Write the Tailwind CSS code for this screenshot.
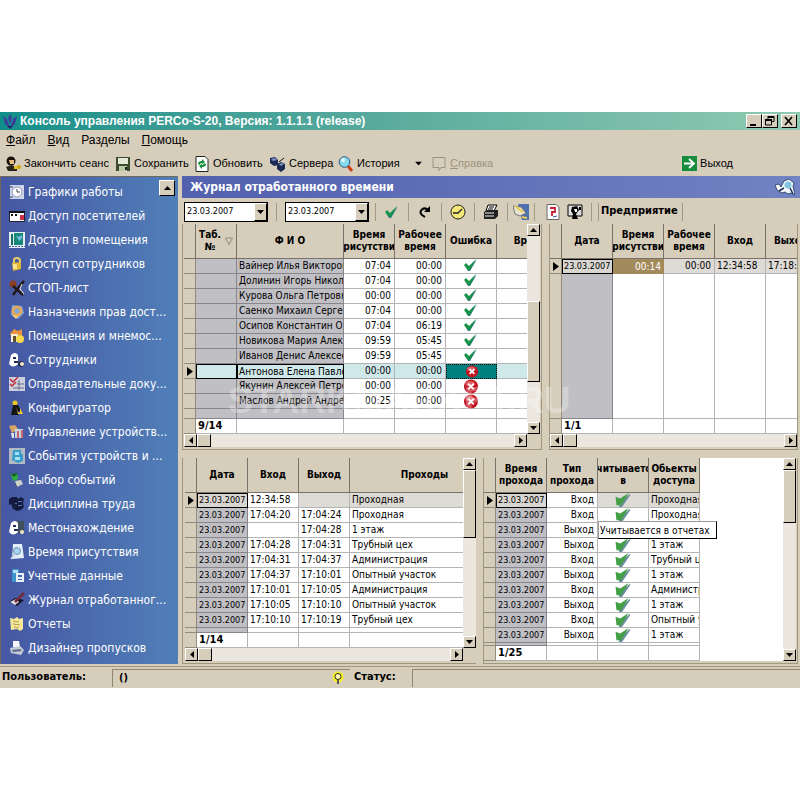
<!DOCTYPE html>
<html lang="ru">
<head>
  <meta charset="UTF-8">
  <meta name="viewport" content="width=device-width, initial-scale=1.0">
  <title>Консоль управления PERCo-S-20</title>
  <script src="https://cdn.jsdelivr.net/npm/@tailwindcss/browser@4"></script>
</head>
<body class="bg-white py-28 font-['DejaVu_Sans_Condensed','DejaVu_Sans',sans-serif] text-black">

  <!-- Shared icons -->
  <svg class="hidden" xmlns="http://www.w3.org/2000/svg">
    <symbol id="ok" viewBox="0 0 14 12"><path d="M2 6l3 3 8-9-7 12H4L1 7z" fill="#3c6f8c"/><path d="M0 6l2-2 3 3 7-7-6 11H4z" fill="#159447"/></symbol>
    <symbol id="ok2" viewBox="0 0 16 15"><path d="M2 6l4 3 9-8 1 1-9 13H4z" fill="#6c8fa0"/><path d="M0 4l5 2L14 0 6 13H1z" fill="#43a047"/></symbol>
    <symbol id="err" viewBox="0 0 16 16"><circle cx="8" cy="8" r="7.5" fill="#c2141f"/><ellipse cx="7" cy="5" rx="5" ry="3" fill="#e0606a"/><path d="M5 5l6 6M11 5l-6 6" stroke="#fff" stroke-width="2"/></symbol>
    <symbol id="up" viewBox="0 0 7 4"><path d="M0 4h7L3.500 0z"/></symbol>
    <symbol id="down" viewBox="0 0 7 4"><path d="M0 0h7L3.500 4z"/></symbol>
    <symbol id="left" viewBox="0 0 4 7"><path d="M4 0v7L0 3.500z"/></symbol>
    <symbol id="right" viewBox="0 0 4 7"><path d="M0 0v7l4-3.500z"/></symbol>
  </svg>

  <div class="bg-[#d6cdbb]">

    <!-- Title bar -->
    <header class="flex h-[18px] items-center bg-linear-to-r from-[#0f8f8b] to-[#8fcab2] pl-[2px] pr-[3px]">
      <svg class="mr-[2px] h-4 w-4 shrink-0" viewBox="0 0 16 16"><path d="M8 1l2 4-2 6-2-6zM1 3l4 3 3 9-5-4zM15 3l-4 3-3 9 5-4z" fill="#3b3f9c"/><path d="M5 13h6l-3 3z" fill="#24246c"/></svg>
      <h1 class="flex-1 whitespace-nowrap font-['Liberation_Sans',sans-serif] text-[12px] font-bold text-white">Консоль управления PERCo-S-20, Версия: 1.1.1.1 (release)</h1>
      <button class="h-[14px] w-4 border border-t-white border-l-white border-r-black border-b-black bg-[#d6cdbb]" aria-label="Свернуть"><svg class="h-3 w-3" viewBox="0 0 12 12"><path d="M3 9h6v2H3z"/></svg></button>
      <button class="h-[14px] w-4 border border-t-white border-l-white border-r-black border-b-black bg-[#d6cdbb]" aria-label="Восстановить"><svg class="h-3 w-3" viewBox="0 0 12 12"><path d="M5 1.500h6v5H9M5 1v3M2.500 5h6v5h-6z" fill="none" stroke="#000"/><path d="M5 1h6v2H5zM2 4h7v2H2z"/></svg></button>
      <button class="ml-[3px] h-[14px] w-4 border border-t-white border-l-white border-r-black border-b-black bg-[#d6cdbb]" aria-label="Закрыть"><svg class="h-3 w-3" viewBox="0 0 12 12"><path d="M3 2l7 8M10 2l-7 8" stroke="#000" stroke-width="1.600"/></svg></button>
    </header>

    <!-- Menu -->
    <nav class="flex h-[19px] items-center gap-3 pl-[6px] font-['Liberation_Sans',sans-serif] text-[12px]">
      <a href="#"><u>Ф</u>айл</a>
      <a href="#"><u>В</u>ид</a>
      <a href="#">Разделы</a>
      <a href="#"><u>П</u>омощь</a>
    </nav>

    <!-- Main toolbar -->
    <div class="flex h-[27px] items-center whitespace-nowrap pt-[2px] pl-[5px] font-['Liberation_Sans',sans-serif] text-[11px]">
      <button class="flex w-[110px] items-center gap-[3px]">
        <svg class="h-4 w-4" viewBox="0 0 16 16"><circle cx="6" cy="5" r="4.500" fill="#1a1208"/><path d="M4 4h5v4H5z" fill="#e8bd7c"/><path d="M1 11l6-2 5 3v3H3z" fill="#2a2416"/><path d="M9 10h6v3H9z" fill="#e2c228"/><circle cx="14" cy="11" r="2" fill="#cfa810"/></svg>
        Закончить сеанс
      </button>
      <button class="flex w-[79px] items-center gap-[3px]">
        <svg class="h-4 w-4" viewBox="0 0 16 16"><path d="M1 1h14v14H1z" fill="#3c4c2c"/><path d="M3 2h10v6H3z" fill="#e4e8d8"/><path d="M4 10h8v5H4z" fill="#b6c8a4"/><path d="M10 11h2v3h-2z" fill="#222"/></svg>
        Сохранить
      </button>
      <button class="flex w-[76px] items-center gap-[3px]">
        <svg class="h-4 w-4" viewBox="0 0 16 16"><path d="M2 .5h9l3 3v12H2z" fill="#fff" stroke="#222"/><path d="M4 8q0-3 4-3V3l3 3-3 2V7Q6 7 6 9zM12 8q0 3-4 3v2l-3-3 3-2v1q2 0 2-2z" fill="#168a3c"/></svg>
        Обновить
      </button>
      <button class="flex w-[68px] items-center gap-[3px]">
        <svg class="h-4 w-4" viewBox="0 0 16 16"><path d="M0 2l5-1 3 3v5l-4 1-4-3zM7 8l4-2 4 2v5l-4 3-4-3z" fill="#1c2954"/><path d="M1 3l4-1 2 2-4 1zM9 8l3-1 2 1-3 2z" fill="#7d95c4"/><path d="M9 6l5-4" stroke="#111"/></svg>
        Сервера
      </button>
      <button class="flex w-[63px] items-center gap-[3px]">
        <svg class="h-4 w-4" viewBox="0 0 16 16"><path d="M10 10l4 5" stroke="#d04018" stroke-width="3"/><circle cx="6.500" cy="6" r="5.300" fill="#88d8ec" stroke="#315a86"/><circle cx="5" cy="4" r="2" fill="#e8faff"/></svg>
        История
      </button>
      <button class="ml-[14px] flex w-4 items-center" aria-label="Список"><svg class="h-[5px] w-[7px]" viewBox="0 0 7 4"><use href="#down"/></svg></button>
      <button class="flex items-center gap-[3px] text-[#9c9480]" disabled>
        <svg class="h-4 w-4" viewBox="0 0 16 16"><path d="M2 1.500h12v10h-4l-2 3v-3H2z" fill="none" stroke="#9c9480"/></svg>
        <span><u>С</u>правка</span>
      </button>
      <button class="ml-auto mr-[67px] flex items-center gap-[3px]">
        <svg class="h-[15px] w-[15px]" viewBox="0 0 15 15"><path d="M0 0h15v15H0z" fill="#178c3c"/><path d="M2 7.500h9M7 3l5 4.500L7 12" stroke="#fff" stroke-width="1.800" fill="none"/></svg>
        Выход
      </button>
    </div>

    <div class="flex">

      <!-- Sections -->
      <aside class="relative w-[178px] shrink-0 border-t border-l border-[#6f6a5c] bg-linear-to-r from-[#4657a3] to-[#507fb8] pl-2 pt-[3px] pb-1">
        <button class="absolute right-[3px] top-[3px] flex h-4 w-4 items-center justify-center border border-t-white border-l-white border-r-black border-b-black bg-[#d6cdbb]" aria-label="Вверх"><svg class="h-1 w-[7px]"><use href="#up"/></svg></button>
        <nav class="text-[12px] leading-6 text-white">
          <a href="#" class="flex h-6 items-center gap-[3px]"><svg class="h-4 w-4 shrink-0" viewBox="0 0 16 16"><path d="M1 1h14v14H1z" fill="#cfd6ea"/><circle cx="8" cy="8" r="5" fill="#fff" stroke="#8894bd"/><path d="M8 5v3h3M1 3h3M1 13h3" stroke="#445" fill="none"/></svg><span class="truncate">Графики работы</span></a>
          <a href="#" class="flex h-6 items-center gap-[3px]"><svg class="h-4 w-4 shrink-0" viewBox="0 0 16 16"><path d="M.5 3.500h15v10H.5z" fill="#fff" stroke="#223"/><path d="M0 3h16v2H0zM2 6h2v2H2zM6 6h2v2H6z" fill="#111"/><path d="M11 7h4v5h-4z" fill="#d0304c"/></svg><span class="truncate">Доступ посетителей</span></a>
          <a href="#" class="flex h-6 items-center gap-[3px]"><svg class="h-4 w-4 shrink-0" viewBox="0 0 16 16"><path d="M0 0h16v16H0z" fill="#e6f0f4"/><path d="M2 2h2v11H2z" fill="#1a6c64"/><path d="M5 1h9v12H5z" fill="#188878"/><path d="M7 3l3 2 3-2v3l-3 3z" fill="#78c0e8"/><path d="M0 14.500h16" stroke="#4a64b0" stroke-dasharray="2 1"/></svg><span class="truncate">Доступ в помещения</span></a>
          <a href="#" class="flex h-6 items-center gap-[3px]"><svg class="h-4 w-4 shrink-0" viewBox="0 0 16 16"><path d="M5 7V4q0-2 3-2t3 3v2" fill="none" stroke="#e8d060" stroke-width="2"/><path d="M3 7l9-1v7l-8 2z" fill="#dfb832"/><path d="M4 8h4v5H4z" fill="#f8e490"/></svg><span class="truncate">Доступ сотрудников</span></a>
          <a href="#" class="flex h-6 items-center gap-[3px]"><svg class="h-4 w-4 shrink-0" viewBox="0 0 16 16"><circle cx="4" cy="4" r="3.500" fill="#8c3c20"/><path d="M4 6l10 9M15 1l-6 7-5 7" stroke="#221818" stroke-width="2.500" fill="none"/><path d="M13 4l-2 5 4 5" stroke="#f0e8e0" fill="none"/></svg><span class="truncate">СТОП-лист</span></a>
          <a href="#" class="flex h-6 items-center gap-[3px]"><svg class="h-4 w-4 shrink-0" viewBox="0 0 16 16"><path d="M3 1l10 1 2 7-6 6-7-4z" fill="#7ea8d8"/><circle cx="8" cy="7" r="4" fill="none" stroke="#f0a848" stroke-width="2.500"/><path d="M3 11l4 4 2-3z" fill="#f8d078"/></svg><span class="truncate">Назначения прав дост...</span></a>
          <a href="#" class="flex h-6 items-center gap-[3px]"><svg class="h-4 w-4 shrink-0" viewBox="0 0 16 16"><path d="M1 6l4-5 4 2 4-2v6H1z" fill="#e8933c"/><path d="M2 6h7v8H2z" fill="#f6f0dc"/><path d="M4 8h3v6H4z" fill="#605030"/><circle cx="11" cy="11" r="4" fill="#f6d84c"/></svg><span class="truncate">Помещения и мнемос...</span></a>
          <a href="#" class="flex h-6 items-center gap-[3px]"><svg class="h-4 w-4 shrink-0" viewBox="0 0 16 16"><path d="M2 3q4-4 7 0v9q-5 5-9 0z" fill="#fff"/><path d="M4 5h3v2H4zM5 9h4v2H5z" fill="#222c50"/><circle cx="12" cy="12" r="3" fill="#222c50"/><circle cx="13" cy="12" r="2" fill="#f4e8c8"/></svg><span class="truncate">Сотрудники</span></a>
          <a href="#" class="flex h-6 items-center gap-[3px]"><svg class="h-4 w-4 shrink-0" viewBox="0 0 16 16"><path d="M0 1h16v14H0z" fill="#ccd0dc"/><path d="M1 3l3 3 5-5M1 8l2 2 4-4" stroke="#c02c3c" stroke-width="1.500" fill="none"/><path d="M8 8h7M4 12h11M10 4v10" stroke="#68708c"/></svg><span class="truncate">Оправдательные доку...</span></a>
          <a href="#" class="flex h-6 items-center gap-[3px]"><svg class="h-4 w-4 shrink-0" viewBox="0 0 16 16"><circle cx="6" cy="3" r="2.500" fill="#e8c828"/><path d="M4 5h5l3 6-4 1 2 3H2z" fill="#141414"/><path d="M7 7l2 5 5 2H9zM11 8l3 6h-3z" fill="#f0cc24"/></svg><span class="truncate">Конфигуратор</span></a>
          <a href="#" class="flex h-6 items-center gap-[3px]"><svg class="h-4 w-4 shrink-0" viewBox="0 0 16 16"><path d="M0 2l6-1 3 4-6 4z" fill="#d8a468"/><path d="M6 5h8v9H6z" fill="#c8d4e4"/><path d="M8 7h2v7H8zM12 6h2v8h-2z" fill="#c8686c"/><path d="M2 9h3v5H3z" fill="#e4e4ec"/></svg><span class="truncate">Управление устройств...</span></a>
          <a href="#" class="flex h-6 items-center gap-[3px]"><svg class="h-4 w-4 shrink-0" viewBox="0 0 16 16"><path d="M0 0h16v16H0z" fill="#b4bac4"/><path d="M4 2h8v3l2 2v6l-5 2-6-3z" fill="#3a9cc8"/><path d="M6 4h4v3H6zM6 9h5v3H6z" fill="#a0e4f4"/></svg><span class="truncate">События устройств и ...</span></a>
          <a href="#" class="flex h-6 items-center gap-[3px]"><svg class="h-4 w-4 shrink-0" viewBox="0 0 16 16"><path d="M2 2l6-1 1 6-5 2z" fill="#2cb040"/><path d="M2 2l3 3 4-4z" fill="#145c24"/><path d="M6 9l6-1 2 4-6 3z" fill="#ccd4c8"/><path d="M6 10l2 5-1 0z" fill="#445"/></svg><span class="truncate">Выбор событий</span></a>
          <a href="#" class="flex h-6 items-center gap-[3px]"><svg class="h-4 w-4 shrink-0" viewBox="0 0 16 16"><path d="M0 3l3-2h5l1 2 3-2 3 2-1 4 1 4-3 3-4 1-4-2-2-5-2 1z" fill="#141d40"/><path d="M9 5h4v1H9zM9 9h4v1H9zM6 7h2v1H6z" fill="#5a74b4"/></svg><span class="truncate">Дисциплина труда</span></a>
          <a href="#" class="flex h-6 items-center gap-[3px]"><svg class="h-4 w-4 shrink-0" viewBox="0 0 16 16"><path d="M5 1h10v12H5z" fill="#40505c"/><path d="M2 3q4-4 7 0v9q-5 5-9 0z" fill="#fff"/><path d="M4 5h3v2H4zM5 9h4v2H5z" fill="#222c50"/><circle cx="13" cy="12" r="2" fill="#f4e8c8"/></svg><span class="truncate">Местонахождение</span></a>
          <a href="#" class="flex h-6 items-center gap-[3px]"><svg class="h-4 w-4 shrink-0" viewBox="0 0 16 16"><path d="M4 0h9l2 14-12 1z" fill="#e4eef6"/><circle cx="8" cy="7" r="3.500" fill="#a8d4ec" stroke="#6c94b8"/><path d="M6 10l-4 5" stroke="#c0d0e4" stroke-width="2"/></svg><span class="truncate">Время присутствия</span></a>
          <a href="#" class="flex h-6 items-center gap-[3px]"><svg class="h-4 w-4 shrink-0" viewBox="0 0 16 16"><path d="M3 1h7v13H3z" fill="#3c94cc"/><path d="M4 2h5v3H4z" fill="#b4e0f4"/><path d="M7 5h8v9H7z" fill="#e8eef8"/><path d="M9 7h4v2H9zM9 11h4v1H9z" fill="#3c6cac"/></svg><span class="truncate">Учетные данные</span></a>
          <a href="#" class="flex h-6 items-center gap-[3px]"><svg class="h-4 w-4 shrink-0" viewBox="0 0 16 16"><path d="M0 10l6-4 9 2-7 6z" fill="#141824"/><path d="M1 10l6-3 3 3-4 3z" fill="#dcdce8"/><path d="M6 10L15 1" stroke="#782838" stroke-width="2.500"/></svg><span class="truncate">Журнал отработанног...</span></a>
          <a href="#" class="flex h-6 items-center gap-[3px]"><svg class="h-4 w-4 shrink-0" viewBox="0 0 16 16"><path d="M1 2l4 1 3-2 2 2 4-1v11l-3 2-3-2-6 1z" fill="#f4e89c"/><path d="M4 5l6 1M4 8l7 1M5 11l5 1" stroke="#b49c48"/></svg><span class="truncate">Отчеты</span></a>
          <a href="#" class="flex h-6 items-center gap-[3px]"><svg class="h-4 w-4 shrink-0" viewBox="0 0 16 16"><path d="M4 1h6l1 6H4z" fill="#f4f6fc"/><path d="M1 8l10-2 4 4-3 5-10-2z" fill="#c4ccd8"/><path d="M3 10l8-1 2 2-9 1z" fill="#5c6884"/></svg><span class="truncate">Дизайнер пропусков</span></a>
        </nav>
      </aside>

      <main class="min-w-0 flex-1 pl-1">
        <div class="flex h-[22px] items-center bg-linear-to-r from-[#5260ae] to-[#7183c2] pl-2 pr-[5px]">
          <h2 class="flex-1 text-[12px] font-bold text-white">Журнал отработанного времени</h2>
          <svg class="h-[18px] w-5" viewBox="0 0 20 18"><path d="M0 7l4-1 2 3 3-6 5-2 5 4-1 3 2 9-4-2-3 1-3-2-3 1-5-3z" fill="#f4f8fc" stroke="#1c3458" stroke-width=".8"/><circle cx="13" cy="7" r="3.500" fill="#84c4e0"/><path d="M9 10l-5 3M15 10l3 6" stroke="#1c3458" stroke-width="1.500"/></svg>
        </div>

        <!-- Journal toolbar -->
        <div class="flex h-[26px] items-center pl-[2px] pt-px">
          <div class="relative h-5 w-[84px] border border-black">
            <select class="block h-full w-full appearance-none bg-white pl-[2px] text-[9px] outline-none" aria-label="Начало периода"><option>23.03.2007</option></select>
            <span class="pointer-events-none absolute inset-y-0 right-0 flex w-[13px] items-center justify-center border border-t-white border-l-white border-r-black border-b-black bg-[#d6cdbb]"><svg class="h-1 w-[7px]"><use href="#down"/></svg></span>
          </div>
          <span class="mx-2 h-[18px] w-px bg-[#a39a84]"></span>
          <div class="relative h-5 w-[84px] border border-black">
            <select class="block h-full w-full appearance-none bg-white pl-[2px] text-[9px] outline-none" aria-label="Конец периода"><option>23.03.2007</option></select>
            <span class="pointer-events-none absolute inset-y-0 right-0 flex w-[13px] items-center justify-center border border-t-white border-l-white border-r-black border-b-black bg-[#d6cdbb]"><svg class="h-1 w-[7px]"><use href="#down"/></svg></span>
          </div>
          <span class="ml-[6px] h-[18px] w-px bg-[#a39a84]"></span>
          <button class="flex w-8 justify-center" aria-label="Применить"><svg class="h-3 w-[14px]"><use href="#ok"/></svg></button>
          <span class="h-[18px] w-px bg-[#a39a84]"></span>
          <button class="flex w-8 justify-center" aria-label="Обновить"><svg class="h-3 w-3" viewBox="0 0 12 12"><path d="M9 4Q6 1 3 3.500T3 9l3 2" fill="none" stroke="#000" stroke-width="2"/><path d="M5 6h6V0z"/></svg></button>
          <span class="h-[18px] w-px bg-[#a39a84]"></span>
          <button class="flex w-8 justify-center" aria-label="Время"><svg class="h-4 w-4" viewBox="0 0 16 16"><circle cx="8" cy="8" r="7" fill="#f6e878" stroke="#222"/><path d="M3 9h5l4-4" fill="none" stroke="#222" stroke-width="1.300"/></svg></button>
          <span class="h-[18px] w-px bg-[#a39a84]"></span>
          <button class="flex w-8 justify-center" aria-label="Печать"><svg class="h-4 w-4" viewBox="0 0 16 16"><path d="M5 1h9l-3 6H3z" fill="#fff" stroke="#000"/><path d="M1 8l3-2h11v6l-3 3H1z" fill="#222"/><path d="M2 9h9M2 12h9" stroke="#eee"/><path d="M6 3h5M5 5h5" stroke="#000"/></svg></button>
          <span class="h-[18px] w-px bg-[#a39a84]"></span>
          <button class="flex w-[26px] justify-center" aria-label="Просмотр"><svg class="h-4 w-4" viewBox="0 0 16 16"><path d="M5 0h11v16H9z" fill="#4c70b0"/><path d="M0 2l8 1 5 6-6 3-5-2z" fill="#e8e4d0" stroke="#777"/><path d="M2 2l8 6M9 13l5 1" stroke="#e6cc50" stroke-width="2"/></svg></button>
          <span class="mr-2 h-[18px] w-px bg-[#a39a84]"></span>
          <button class="flex w-5 justify-center" aria-label="Отчет"><svg class="h-4 w-4" viewBox="0 0 16 16"><path d="M2 .5h9l3 3v12H2z" fill="#fff" stroke="#666"/><path d="M5 4h5v4H7v4" stroke="#c81e30" stroke-width="1.800" fill="none"/><path d="M8 13l4-1" stroke="#2a50a0"/></svg></button>
          <button class="flex w-6 justify-center" aria-label="Сотрудник"><svg class="h-4 w-4" viewBox="0 0 16 16"><path d="M1 1h14v11H1z" fill="#ddd" stroke="#000"/><path d="M5 3l5-1 2 4-3 4 2 5H5l1-5-2-3z"/><path d="M7 5h3v3H8z" fill="#fff"/><path d="M12 3h2v3h-2z"/></svg></button>
          <span class="mr-[6px] ml-1 h-[18px] w-px bg-[#a39a84]"></span>
          <span class="mr-[2px] h-[18px] w-px bg-[#a39a84]"></span>
          <span class="text-[11px] font-bold">Предприятие</span>
          <span class="ml-1 h-[18px] w-px bg-[#a39a84]"></span>
        </div>

        <!-- Upper grids -->
        <div class="relative grid grid-cols-[360fr_249fr] gap-[7px] pr-[2px]">
          <section class="min-w-0 border-r border-b border-l border-[#a0977c] pl-px pr-px pb-[2px]">
            <div class="flex">
              <div class="min-w-0 flex-1 overflow-hidden bg-white">
                <table class="w-[380px] table-fixed border-separate border-spacing-0 text-[10px] leading-[14px]">
                  <colgroup><col class="w-3"><col class="w-[41px]"><col class="w-[107px]"><col class="w-[51px]"><col class="w-[51px]"><col class="w-[51px]"><col class="w-[67px]"></colgroup>
                  <thead>
                    <tr class="h-[35px] leading-3">
                      <th class="border-r border-b border-[#77736a] bg-[#d6cdbb]"></th>
                      <th class="border-r border-b border-[#77736a] bg-[#d6cdbb]"><div class="flex items-center justify-center gap-1"><span>Таб.<br>№</span><svg class="h-2 w-2" viewBox="0 0 8 8"><path d="M.5 1h7L4 7.500z" fill="none" stroke="#948c78"/></svg></div></th>
                      <th class="border-r border-b border-[#77736a] bg-[#d6cdbb]">Ф И О</th>
                      <th class="overflow-hidden border-r border-b border-[#77736a] bg-[#d6cdbb]"><div class="flex justify-center"><span>Время<br>присутствия</span></div></th>
                      <th class="border-r border-b border-[#77736a] bg-[#d6cdbb]">Рабочее<br>время</th>
                      <th class="border-r border-b border-[#77736a] bg-[#d6cdbb]">Ошибка</th>
                      <th class="border-r border-b border-[#77736a] bg-[#d6cdbb]">Время</th>
                    </tr>
                  </thead>
                  <tbody id="people"></tbody>
                </table>
              </div>
              <div class="flex w-[13px] flex-col bg-[#ebe7df]">
                <button class="flex h-3 items-center justify-center border border-t-white border-l-white border-r-black border-b-black bg-[#d6cdbb]" aria-label="Вверх"><svg class="h-1 w-[7px]"><use href="#up"/></svg></button>
                <div class="h-[65px]"></div>
                <div class="h-[81px] border border-t-white border-l-white border-r-black border-b-black bg-[#d6cdbb]"></div>
                <button class="mt-auto flex h-3 items-center justify-center border border-t-white border-l-white border-r-black border-b-black bg-[#d6cdbb]" aria-label="Вниз"><svg class="h-1 w-[7px]"><use href="#down"/></svg></button>
              </div>
            </div>
            <div class="mr-[13px] flex h-[13px] bg-[#ebe7df]">
              <button class="flex w-[13px] items-center justify-center border border-t-white border-l-white border-r-black border-b-black bg-[#d6cdbb]" aria-label="Влево"><svg class="h-[7px] w-1"><use href="#left"/></svg></button>
              <div class="w-[14px] border border-t-white border-l-white border-r-black border-b-black bg-[#d6cdbb]"></div>
              <button class="ml-auto flex w-[13px] items-center justify-center border border-t-white border-l-white border-r-black border-b-black bg-[#d6cdbb]" aria-label="Вправо"><svg class="h-[7px] w-1"><use href="#right"/></svg></button>
            </div>
          </section>

          <section class="min-w-0 border-r border-b border-l border-[#a0977c] pb-[2px]">
            <div class="overflow-hidden bg-white">
              <table class="w-[267px] table-fixed border-separate border-spacing-0 text-[10px] leading-[14px]">
                <colgroup><col class="w-3"><col class="w-[51px]"><col class="w-[51px]"><col class="w-[51px]"><col class="w-[51px]"><col class="w-[51px]"></colgroup>
                <thead>
                  <tr class="h-[35px] leading-3">
                    <th class="border-r border-b border-[#77736a] bg-[#d6cdbb]"></th>
                    <th class="border-r border-b border-[#77736a] bg-[#d6cdbb]">Дата</th>
                    <th class="overflow-hidden border-r border-b border-[#77736a] bg-[#d6cdbb]"><div class="flex justify-center"><span>Время<br>присутствия</span></div></th>
                    <th class="border-r border-b border-[#77736a] bg-[#d6cdbb]">Рабочее<br>время</th>
                    <th class="border-r border-b border-[#77736a] bg-[#d6cdbb]">Вход</th>
                    <th class="border-r border-b border-[#77736a] bg-[#d6cdbb]">Выход</th>
                  </tr>
                </thead>
                <tbody id="days"></tbody>
              </table>
            </div>
            <div class="flex h-[13px] bg-[#ebe7df]">
              <button class="flex w-[13px] items-center justify-center border border-t-white border-l-white border-r-black border-b-black bg-[#d6cdbb]" aria-label="Влево"><svg class="h-[7px] w-1"><use href="#left"/></svg></button>
              <div class="w-[14px] border border-t-white border-l-white border-r-black border-b-black bg-[#d6cdbb]"></div>
              <button class="ml-auto flex w-[13px] items-center justify-center border border-t-white border-l-white border-r-black border-b-black bg-[#d6cdbb]" aria-label="Вправо"><svg class="h-[7px] w-1"><use href="#right"/></svg></button>
            </div>
          </section>

          <div class="pointer-events-none absolute top-[155px] left-[46px] font-['Liberation_Sans',sans-serif] text-[37px] leading-[44px] font-bold whitespace-nowrap text-white/30">STARKMARKET.RU</div>
        </div>

        <!-- Lower grids -->
        <div class="mt-2 grid grid-cols-[294fr_315fr] gap-[7px] pr-[2px]">
          <section class="min-w-0 border-b border-l border-[#a0977c] pl-[2px] pb-[2px]">
            <div class="flex">
              <div class="min-w-0 flex-1 overflow-hidden bg-white">
                <table class="w-[315px] table-fixed border-separate border-spacing-0 text-[10px] leading-[14px]">
                  <colgroup><col class="w-3"><col class="w-[51px]"><col class="w-[51px]"><col class="w-[51px]"><col class="w-[150px]"></colgroup>
                  <thead>
                    <tr class="h-[35px] leading-3">
                      <th class="border-r border-b border-[#77736a] bg-[#d6cdbb]"></th>
                      <th class="border-r border-b border-[#77736a] bg-[#d6cdbb]">Дата</th>
                      <th class="border-r border-b border-[#77736a] bg-[#d6cdbb]">Вход</th>
                      <th class="border-r border-b border-[#77736a] bg-[#d6cdbb]">Выход</th>
                      <th class="border-r border-b border-[#77736a] bg-[#d6cdbb]">Проходы</th>
                    </tr>
                  </thead>
                  <tbody id="passes"></tbody>
                </table>
              </div>
              <div class="flex w-[13px] flex-col bg-[#ebe7df]">
                <button class="flex h-3 items-center justify-center border border-t-white border-l-white border-r-black border-b-black bg-[#d6cdbb]" aria-label="Вверх"><svg class="h-1 w-[7px]"><use href="#up"/></svg></button>
                <div class="h-[68px] border border-t-white border-l-white border-r-black border-b-black bg-[#d6cdbb]"></div>
                <button class="mt-auto flex h-3 items-center justify-center border border-t-white border-l-white border-r-black border-b-black bg-[#d6cdbb]" aria-label="Вниз"><svg class="h-1 w-[7px]"><use href="#down"/></svg></button>
              </div>
            </div>
            <div class="mr-[13px] flex h-[13px] bg-[#ebe7df]">
              <button class="flex w-[13px] items-center justify-center border border-t-white border-l-white border-r-black border-b-black bg-[#d6cdbb]" aria-label="Влево"><svg class="h-[7px] w-1"><use href="#left"/></svg></button>
              <div class="w-[14px] border border-t-white border-l-white border-r-black border-b-black bg-[#d6cdbb]"></div>
              <button class="ml-auto flex w-[13px] items-center justify-center border border-t-white border-l-white border-r-black border-b-black bg-[#d6cdbb]" aria-label="Вправо"><svg class="h-[7px] w-1"><use href="#right"/></svg></button>
            </div>
          </section>

          <section class="relative min-w-0 border-r border-b border-l border-[#a0977c] pr-px pb-[2px]">
            <div class="flex">
              <div class="min-w-0 flex-1 overflow-hidden bg-white">
                <table class="w-[216px] table-fixed border-separate border-spacing-0 text-[10px] leading-[14px]">
                  <colgroup><col class="w-3"><col class="w-[51px]"><col class="w-[51px]"><col class="w-[51px]"><col class="w-[51px]"></colgroup>
                  <thead>
                    <tr class="h-[35px] leading-3">
                      <th class="border-r border-b border-[#77736a] bg-[#d6cdbb]"></th>
                      <th class="border-r border-b border-[#77736a] bg-[#d6cdbb]">Время<br>прохода</th>
                      <th class="border-r border-b border-[#77736a] bg-[#d6cdbb]">Тип<br>прохода</th>
                      <th class="overflow-hidden border-r border-b border-[#77736a] bg-[#d6cdbb]"><div class="flex justify-center"><span>Учитывается<br>в</span></div></th>
                      <th class="border-r border-b border-[#77736a] bg-[#d6cdbb]">Обьекты<br>доступа</th>
                    </tr>
                  </thead>
                  <tbody id="events"></tbody>
                </table>
              </div>
              <div class="flex w-[13px] flex-col bg-[#ebe7df]">
                <button class="flex h-3 items-center justify-center border border-t-white border-l-white border-r-black border-b-black bg-[#d6cdbb]" aria-label="Вверх"><svg class="h-1 w-[7px]"><use href="#up"/></svg></button>
                <div class="h-[53px] border border-t-white border-l-white border-r-black border-b-black bg-[#d6cdbb]"></div>
                <button class="mt-auto flex h-3 items-center justify-center border border-t-white border-l-white border-r-black border-b-black bg-[#d6cdbb]" aria-label="Вниз"><svg class="h-1 w-[7px]"><use href="#down"/></svg></button>
              </div>
            </div>
            <div class="absolute top-[63px] left-[114px] flex h-[18px] w-[119px] items-center border border-t-[#999] border-l-[#999] border-r-black border-b-black bg-white pl-px text-[10px] whitespace-nowrap" role="tooltip">Учитывается в отчетах</div>
          </section>
        </div>
      </main>
    </div>

    <!-- Status bar -->
    <footer class="mt-[2px] flex h-[22px] items-center border-t border-[#a0977c] text-[11px] font-bold">
      <span class="w-28 pl-[2px]">Пользователь:</span>
      <span class="flex h-[18px] w-[238px] items-center justify-between border-t border-l border-[#8f8770] pr-[6px] pl-[6px]">()
        <svg class="h-[14px] w-3" viewBox="0 0 12 14"><circle cx="6" cy="6" r="5.500" fill="#f8f020"/><circle cx="6" cy="5.500" r="3" fill="#fffbb0" stroke="#222"/><path d="M5 9h2v4H5z" fill="#555"/></svg>
      </span>
      <span class="w-[62px] pl-1">Статус:</span>
      <span class="h-[18px] flex-1 border-t border-l border-[#8f8770]"></span>
    </footer>
  </div>

  <script>
    const marker = '<svg class="ml-[3px] h-[9px] w-[6px]" viewBox="0 0 4 7" preserveAspectRatio="none"><use href="#right"/></svg>';
    const ok = '<svg class="mx-auto block h-3 w-[14px]"><use href="#ok"/></svg>';
    const ok2 = '<svg class="mx-auto block h-[14px] w-4"><use href="#ok2"/></svg>';
    const err = '<svg class="mx-auto block h-[15px] w-4"><use href="#err"/></svg>';

    const head = "border-r border-b border-[#918b7c] bg-[#d6cdbb] p-0";
    const grey = "overflow-hidden whitespace-nowrap border-r border-b border-[#88868c] bg-[#c0bfc4] p-0 pl-[2px]";
    const greySel = "overflow-hidden whitespace-nowrap border border-black bg-[#d9d6d1] p-0 pl-px leading-[13px]";
    const text = "overflow-hidden whitespace-nowrap border-r border-b border-[#b4b4b4] p-0 pl-[2px]";
    const right = "overflow-hidden whitespace-nowrap border-r border-b border-[#b4b4b4] p-0 pr-[3px] text-right";
    const gap = "border-r border-b border-[#b4b4b4] p-0";

    const cell = (cls, value = "") => `<td class="${cls}">${value}</td>`;
    const row = (cells, cls = "h-[15px]") => `<tr class="${cls}">${cells.join("")}</tr>`;

    // Employees
    const people = [
      ["Вайнер Илья Викторович", "07:04", "00:00", ok],
      ["Долинин Игорь Николаевич", "07:04", "00:00", ok],
      ["Курова Ольга Петровна", "00:00", "00:00", ok],
      ["Саенко Михаил Сергеевич", "07:04", "00:00", ok],
      ["Осипов Константин Олегович", "07:04", "06:19", ok],
      ["Новикова Мария Алексеевна", "09:59", "05:45", ok],
      ["Иванов Денис Алексеевич", "09:59", "05:45", ok],
      ["Антонова Елена Павловна", "00:00", "00:00", err],
      ["Якунин Алексей Петрович", "00:00", "00:00", err],
      ["Маслов Андрей Андреевич", "00:25", "00:00", err],
    ];
    const current = 7;
    const sel = "overflow-hidden whitespace-nowrap border border-black bg-[#cfe8ea] p-0 pl-px leading-[13px]";
    document.getElementById("people").innerHTML =
      people.map(([name, present, work, icon], i) => i === current
        ? row([cell(head, marker), cell(sel), cell(sel, name), cell(right, present), cell(right, work), cell("border border-dotted border-black bg-[#007f7f] p-0", '<svg class="mx-auto block h-[13px] w-4"><use href="#err"/></svg>'), cell(gap)], "h-[15px] bg-[#cfe8ea]")
        : row([cell(head), cell(grey), cell(grey, name), cell(right, present), cell(right, work), cell(gap, `<div class="h-[14px]">${icon}</div>`), cell(gap)])
      ).join("") +
      row([cell(head), cell(grey), cell(grey), cell(gap), cell(gap), cell(gap), cell(gap)], "h-[10px]") +
      row([cell(head), cell(text, "9/14"), cell(gap), cell(gap), cell(gap), cell(gap), cell(gap)], "h-[15px] text-[11px] font-bold");

    // Days of the selected employee
    document.getElementById("days").innerHTML =
      row([cell(head, marker), cell(greySel + " text-[9px]", "23.03.2007"), cell("bg-[#a38a5c] p-0 pr-[3px] text-right text-white", "00:14"), cell(right, "00:00"), cell(text, "12:34:58"), cell(text, "17:18:22")], "h-[15px] bg-[#dedad5]") +
      row([cell(head), cell(grey), cell(gap), cell(gap), cell(gap), cell(gap)], "h-[145px]") +
      row([cell(head), cell(text, "1/1"), cell(gap), cell(gap), cell(gap), cell(gap)], "h-[15px] text-[11px] font-bold");

    // Passes
    const passes = [
      ["12:34:58", "", "Проходная"],
      ["17:04:20", "17:04:24", "Проходная"],
      ["", "17:04:28", "1 этаж"],
      ["17:04:28", "17:04:31", "Трубный цех"],
      ["17:04:31", "17:04:37", "Администрация"],
      ["17:04:37", "17:10:01", "Опытный участок"],
      ["17:10:01", "17:10:05", "Администрация"],
      ["17:10:05", "17:10:10", "Опытный участок"],
      ["17:10:10", "17:10:19", "Трубный цех"],
    ];
    document.getElementById("passes").innerHTML =
      passes.map(([enter, leave, place], i) => row([
        cell(head, i ? "" : marker), cell((i ? grey : greySel) + " text-[9px]", "23.03.2007"),
        cell(text + " bg-white", enter), cell(text, leave), cell(text, place),
      ], i ? "h-[15px]" : "h-[15px] bg-[#dedad5]")).join("") +
      row([cell(head), cell(grey), cell(gap), cell(gap), cell(gap)], "h-[5px]") +
      row([cell(head), cell(text, "1/14"), cell(gap), cell(gap), cell(gap)], "h-[15px] text-[11px] font-bold");

    // Events
    const events = [
      ["Вход", "Проходная"], ["Вход", "Проходная"], ["Выход", "1 этаж"], ["Выход", "1 этаж"],
      ["Вход", "Трубный цех"], ["Выход", "1 этаж"], ["Вход", "Администрация"], ["Выход", "1 этаж"],
      ["Вход", "Опытный участок"], ["Выход", "1 этаж"],
    ];
    document.getElementById("events").innerHTML =
      events.map(([type, place], i) => row([
        cell(head, i ? "" : marker), cell((i ? grey : greySel) + " text-[9px]", "23.03.2007"),
        cell(right + " bg-white", type), cell(gap, ok2), cell(text, place),
      ], i ? "h-[15px]" : "h-[15px] bg-[#dedad5]")).join("") +
      row([cell(head), cell(grey), cell(gap), cell(gap), cell(gap)], "h-[3px]") +
      row([cell(head), cell(text, "1/25"), cell(gap), cell(gap), cell(gap)], "h-[15px] text-[11px] font-bold");
  </script>
</body>
</html>
